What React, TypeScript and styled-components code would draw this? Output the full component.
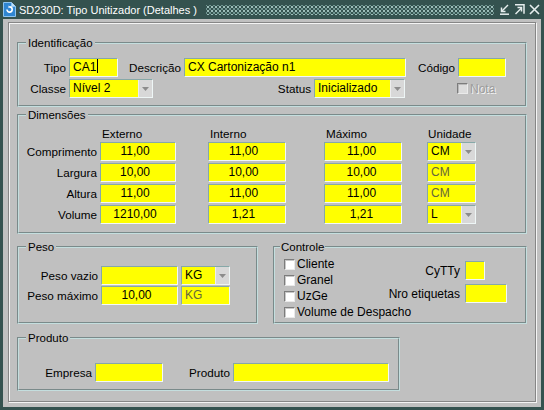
import React from 'react'
import styled, { createGlobalStyle } from 'styled-components'

const GlobalStyle = createGlobalStyle`
  html, body {
    margin: 0;
    padding: 0;
    background: #c0c0c0;
  }
  body {
    font-family: 'Liberation Sans', Arial, sans-serif;
    font-size: 11.7px;
    color: #000;
  }
`

const Window = styled.div`
  width: 544px;
  height: 410px;
  box-sizing: border-box;
  display: flex;
  flex-direction: column;
  background: #c0c0c0;
  border: 3px solid #34524f;
  border-top: 0;
`

const TitleBar = styled.div`
  height: 19px;
  flex: none;
  display: flex;
  align-items: center;
  margin: 0 -3px;
  padding: 0 4px 0 3px;
  background: #34524f;
  color: #fff;
`

const TitleText = styled.span`
  font-size: 11px;
  margin-left: 3px;
  white-space: nowrap;
`

const Grip = styled.div`
  flex: 1;
  height: 10px;
  margin: 0 5px 0 9px;
  background-image: radial-gradient(circle, #9bbcb8 0.8px, transparent 1.1px),
    radial-gradient(circle, #6f9591 0.8px, transparent 1.1px);
  background-size: 4px 4px, 4px 4px;
  background-position: 0 0, 2px 2px;
`

const TitleButtons = styled.div`
  display: flex;
  align-items: center;
  gap: 4px;
`

const Body = styled.div`
  flex: 1;
  display: flex;
  padding: 3px 5px 5px 5px;
  min-height: 0;
`

const Panel = styled.div`
  flex: 1;
  display: flex;
  flex-direction: column;
  align-items: flex-start;
  padding: 13px 8px 0 8px;
  border: 1px solid #868686;
  box-shadow: inset 1px 1px 0 #f4f4f4, 1px 1px 0 #f4f4f4;
`

const Group = styled.fieldset<{ $w?: number; $pad: string; $mt?: number; $grow?: boolean }>`
  margin: ${p => p.$mt ?? 0}px 0 0 0;
  padding: ${p => p.$pad};
  width: ${p => (p.$w ? `${p.$w}px` : 'auto')};
  flex: ${p => (p.$grow ? 1 : 'none')};
  box-sizing: border-box;
  min-width: 0;
  border: 2px groove #c4dede;
`

const Legend = styled.legend<{ $ml?: number; $px?: number }>`
  margin-left: ${p => p.$ml ?? 7}px;
  padding: 0 ${p => p.$px ?? 2}px;
  line-height: 14px;
  font-size: 11.5px;
`

const Stack = styled.div<{ $gap: number }>`
  display: flex;
  flex-direction: column;
  gap: ${p => p.$gap}px;
`

const Row = styled.div`
  display: flex;
  align-items: center;
  height: 19px;
`

const Label = styled.span<{ $w: number }>`
  width: ${p => p.$w}px;
  flex: none;
  box-sizing: border-box;
  padding-right: 3px;
  text-align: right;
  white-space: nowrap;
`

const Field = styled.div<{ $w: number; $align?: string; $pr?: number; $dim?: boolean }>`
  width: ${p => p.$w}px;
  height: 19px;
  flex: none;
  box-sizing: border-box;
  padding: 0 ${p => p.$pr ?? 3}px 0 3px;
  background: #ffff00;
  border: 1px solid;
  border-color: #86a8a8 #f2f8f8 #f2f8f8 #86a8a8;
  line-height: 17px;
  text-align: ${p => p.$align ?? 'left'};
  color: ${p => (p.$dim ? '#66663e' : '#000')};
  white-space: nowrap;
  overflow: hidden;
  font-size: 12px;
`

const Spacer = styled.span<{ $w: number }>`
  width: ${p => p.$w}px;
  flex: none;
`

const Caret = styled.span`
  display: inline-block;
  width: 1px;
  height: 14px;
  margin-left: 1px;
  vertical-align: -2px;
  background: #000;
`

const Combo = styled.div<{ $w: number }>`
  width: ${p => p.$w}px;
  height: 19px;
  flex: none;
  display: flex;
  box-sizing: border-box;
  background: #ffff00;
  border: 1px solid;
  border-color: #86a8a8 #eef6f6 #eef6f6 #86a8a8;
  font-size: 12px;
`

const ComboText = styled.span`
  flex: 1;
  padding-left: 3px;
  line-height: 17px;
  white-space: nowrap;
  overflow: hidden;
`

const ComboButton = styled.span`
  width: 13px;
  flex: none;
  display: flex;
  align-items: center;
  justify-content: center;
  background: #d8d8d8;
  border-left: 1px solid #eeeeee;
`

const CheckList = styled.div`
  display: flex;
  flex-direction: column;
  width: 100px;
  flex: none;
`

const CheckItem = styled.label<{ $disabled?: boolean; $ml?: number }>`
  display: flex;
  align-items: center;
  gap: 2px;
  height: 16px;
  margin-left: ${p => p.$ml ?? 0}px;
  font-size: 12px;
  white-space: nowrap;
  color: ${p => (p.$disabled ? '#9c9c9c' : '#000')};
  text-shadow: ${p => (p.$disabled ? '1px 1px 0 #f4f4f4' : 'none')};
`

const CheckBox = styled.span<{ $disabled?: boolean }>`
  width: 11px;
  height: 11px;
  flex: none;
  box-sizing: border-box;
  background: ${p => (p.$disabled ? '#dcdcdc' : '#fff')};
  border: 1px solid;
  border-color: #7c7c7c #eaeaea #eaeaea #7c7c7c;
  box-shadow: inset 1px 1px 0 ${p => (p.$disabled ? '#b8b8b8' : '#c8c8c8')};
`

const DimGrid = styled.div`
  display: grid;
  grid-template-columns: 81px 108px 116px 103px 49px;
  grid-template-rows: 13px repeat(4, 19px);
  row-gap: 2px;
  align-items: center;
`

const ColHead = styled.span<{ $pl?: number }>`
  padding-left: ${p => p.$pl ?? 2}px;
  line-height: 13px;
  align-self: end;
`

const Split = styled.div`
  display: flex;
  gap: 15px;
  margin-top: 6px;
  width: 510px;
`

const ControlBody = styled.div`
  display: flex;
  justify-content: space-between;
  padding: 2px 18px 0 9px;
`

const SideGrid = styled.div`
  display: grid;
  grid-template-columns: auto 42px;
  row-gap: 4px;
  align-items: center;
  align-content: start;
  padding-top: 5px;
`

const SideLabel = styled.span`
  text-align: right;
  padding-right: 5px;
  white-space: nowrap;
  font-size: 12px;
`

const Arrow = () => (
  <svg width="7" height="4" viewBox="0 0 7 4">
    <path d="M0 0h7L3.5 4z" fill="#8c8c8c" />
  </svg>
)

const Select = ({ w, value }: { w: number; value: string }) => (
  <Combo $w={w}>
    <ComboText>{value}</ComboText>
    <ComboButton>
      <Arrow />
    </ComboButton>
  </Combo>
)

const AppIcon = () => (
  <svg width="13" height="15" viewBox="0 0 13 15">
    <path d="M0.5 0.5h8l4 4v10h-12z" fill="#2f86d2" stroke="#8cc4f0" />
    <path d="M8.5 0.5v4h4" fill="#bfe0fa" stroke="#8cc4f0" />
    <path d="M4 7.5a2.6 2.6 0 1 0 2.6 -2.6" fill="none" stroke="#fff" strokeWidth="1.6" />
    <path d="M5.5 3.5l2 1.4-2 1.4z" fill="#fff" />
  </svg>
)

const WinButton = ({ kind }: { kind: 'min' | 'max' | 'close' }) => (
  <svg width="11" height="11" viewBox="0 0 11 11">
    {kind === 'min' && (
      <g stroke="#e6eeee" strokeWidth="1.5" fill="none">
        <path d="M9 1L2.5 7.5" />
        <path d="M2.5 3.5v4h4" />
        <path d="M1 10.2h9" />
      </g>
    )}
    {kind === 'max' && (
      <g stroke="#e6eeee" strokeWidth="1.5" fill="none">
        <path d="M1 0.8h9v9" />
        <path d="M1.5 10L7.5 4" />
        <path d="M3.5 3.5h4v4" />
      </g>
    )}
    {kind === 'close' && (
      <g stroke="#e6eeee" strokeWidth="1.6" fill="none">
        <path d="M1 1l9 9M10 1l-9 9" />
      </g>
    )}
  </svg>
)

const dims = [
  { label: 'Comprimento', ext: '11,00', int: '11,00', max: '11,00', unit: 'CM', combo: true },
  { label: 'Largura', ext: '10,00', int: '10,00', max: '10,00', unit: 'CM', combo: false },
  { label: 'Altura', ext: '11,00', int: '11,00', max: '11,00', unit: 'CM', combo: false },
  { label: 'Volume', ext: '1210,00', int: '1,21', max: '1,21', unit: 'L', combo: true },
]

const controls = ['Cliente', 'Granel', 'UzGe', 'Volume de Despacho']

export default function App() {
  return (
    <>
      <GlobalStyle />
      <Window>
        <TitleBar>
          <AppIcon />
          <TitleText>SD230D: Tipo Unitizador (Detalhes )</TitleText>
          <Grip />
          <TitleButtons>
            <WinButton kind="min" />
            <WinButton kind="max" />
            <WinButton kind="close" />
          </TitleButtons>
        </TitleBar>
        <Body>
          <Panel>
            <Group $w={510} $pad="8px 0 7px 0">
              <Legend>Identificação</Legend>
              <Stack $gap={2}>
                <Row>
                  <Label $w={50}>Tipo</Label>
                  <Field $w={49}>
                    CA1
                    <Caret />
                  </Field>
                  <Label $w={66}>Descrição</Label>
                  <Field $w={222}>CX Cartonização n1</Field>
                  <Label $w={52}>Código</Label>
                  <Field $w={48} />
                </Row>
                <Row>
                  <Label $w={50}>Classe</Label>
                  <Select w={84} value="Nível 2" />
                  <Label $w={161}>Status</Label>
                  <Select w={91} value="Inicializado" />
                  <CheckItem $disabled $ml={52}>
                    <CheckBox $disabled />
                    Nota
                  </CheckItem>
                </Row>
              </Stack>
            </Group>

            <Group $w={510} $pad="5px 0 8px 0" $mt={1}>
              <Legend>Dimensões</Legend>
              <DimGrid>
                <span />
                <ColHead>Externo</ColHead>
                <ColHead>Interno</ColHead>
                <ColHead>Máximo</ColHead>
                <ColHead $pl={1}>Unidade</ColHead>
                {dims.map(d => (
                  <React.Fragment key={d.label}>
                    <Label $w={81}>{d.label}</Label>
                    <Field $w={76} $align="center" $pr={9}>
                      {d.ext}
                    </Field>
                    <Field $w={78} $align="center" $pr={10}>
                      {d.int}
                    </Field>
                    <Field $w={78} $align="center" $pr={6}>
                      {d.max}
                    </Field>
                    {d.combo ? (
                      <Select w={49} value={d.unit} />
                    ) : (
                      <Field $w={49} $dim>
                        {d.unit}
                      </Field>
                    )}
                  </React.Fragment>
                ))}
              </DimGrid>
            </Group>

            <Split>
              <Group $w={241} $pad="12px 0 17px 0">
                <Legend>Peso</Legend>
                <Stack $gap={1}>
                  <Row>
                    <Label $w={82}>Peso vazio</Label>
                    <Field $w={77} />
                    <Spacer $w={3} />
                    <Select w={49} value="KG" />
                  </Row>
                  <Row>
                    <Label $w={82}>Peso máximo</Label>
                    <Field $w={77} $align="center" $pr={9}>
                      10,00
                    </Field>
                    <Spacer $w={3} />
                    <Field $w={49} $dim>
                      KG
                    </Field>
                  </Row>
                </Stack>
              </Group>
              <Group $pad="0" $grow>
                <Legend $ml={5} $px={1}>
                  Controle
                </Legend>
                <ControlBody>
                  <CheckList>
                    {controls.map(c => (
                      <CheckItem key={c}>
                        <CheckBox />
                        {c}
                      </CheckItem>
                    ))}
                  </CheckList>
                  <SideGrid>
                    <SideLabel>CyTTy</SideLabel>
                    <Field $w={20} />
                    <SideLabel>Nro etiquetas</SideLabel>
                    <Field $w={42} />
                  </SideGrid>
                </ControlBody>
              </Group>
            </Split>

            <Group $w={383} $pad="18px 0 7px 0" $mt={7}>
              <Legend>Produto</Legend>
              <Row>
                <Label $w={76}>Empresa</Label>
                <Field $w={68} />
                <Label $w={70}>Produto</Label>
                <Field $w={156} />
              </Row>
            </Group>
          </Panel>
        </Body>
      </Window>
    </>
  )
}
